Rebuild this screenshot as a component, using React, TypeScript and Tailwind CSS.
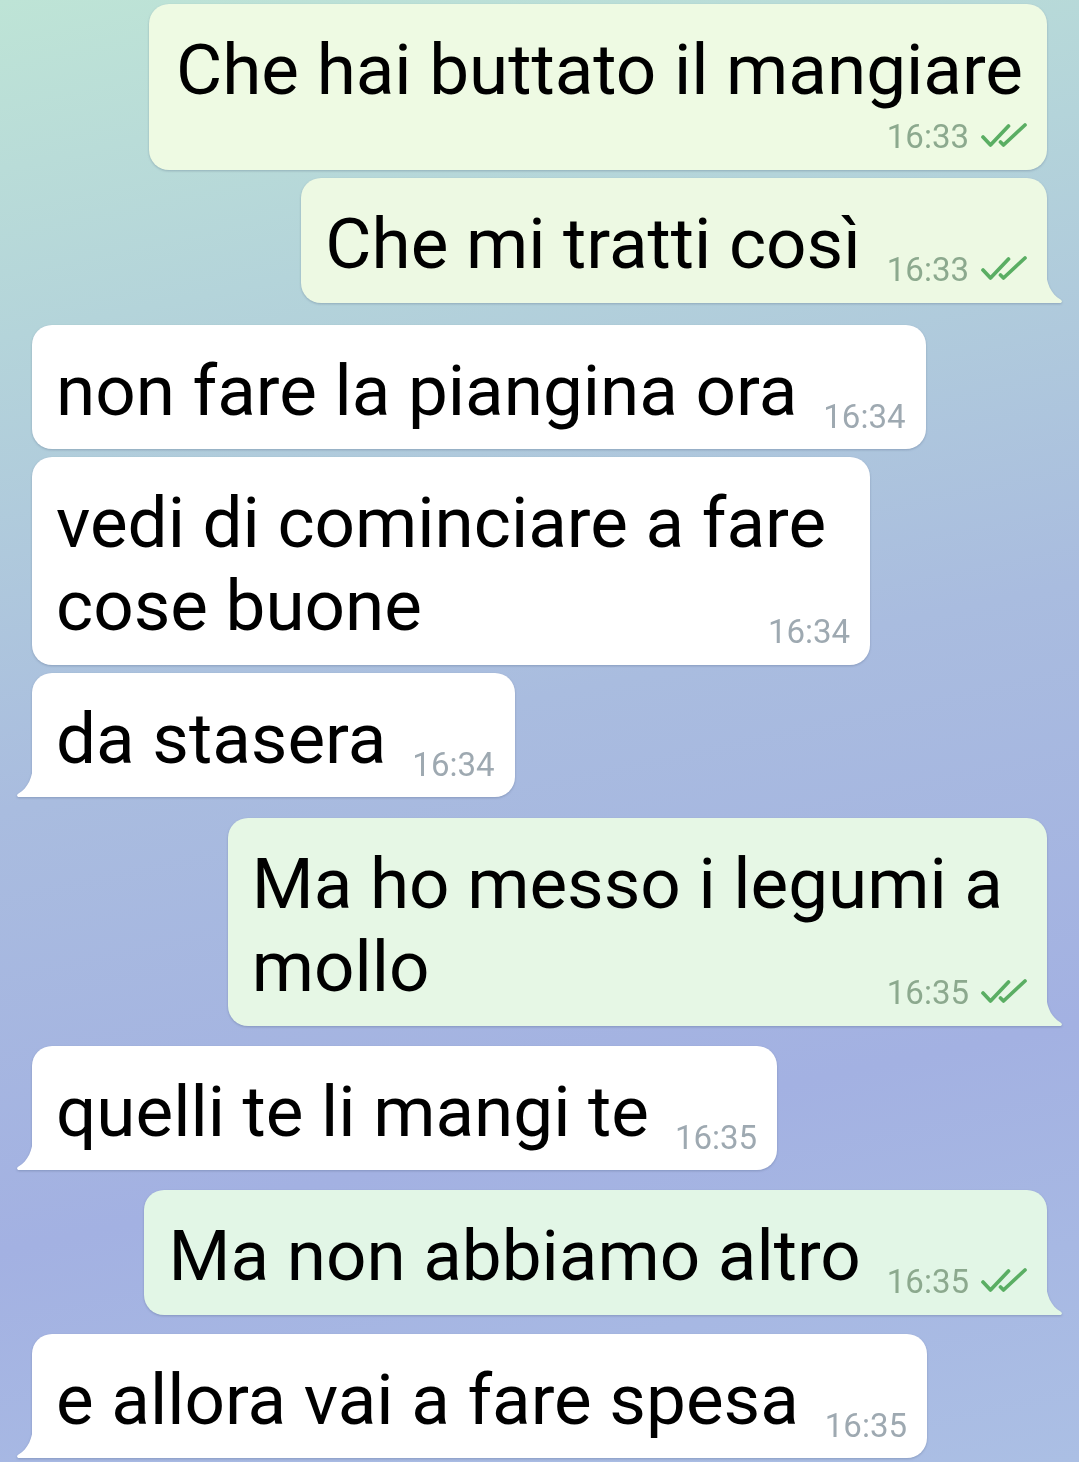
import React from "react";

type Msg = {
  out: boolean;
  lines: string[];
  time: string;
  tail?: boolean;
  timeBelow?: boolean;
  bg: string;
  fill: string;
  mt: string;
};

const messages: Msg[] = [
  { out: true, lines: ["Che hai buttato il mangiare"], time: "16:33", timeBelow: true, bg: "bg-[#eefae3]", fill: "#eefae3", mt: "mt-[4px]" },
  { out: true, lines: ["Che mi tratti così"], time: "16:33", tail: true, bg: "bg-[#edf9e3]", fill: "#edf9e3", mt: "mt-[8px]" },
  { out: false, lines: ["non fare la piangina ora"], time: "16:34", bg: "bg-white", fill: "#ffffff", mt: "mt-[22px]" },
  { out: false, lines: ["vedi di cominciare a fare", "cose buone"], time: "16:34", bg: "bg-white", fill: "#ffffff", mt: "mt-[8px]" },
  { out: false, lines: ["da stasera"], time: "16:34", tail: true, bg: "bg-white", fill: "#ffffff", mt: "mt-[8px]" },
  { out: true, lines: ["Ma ho messo i legumi a", "mollo"], time: "16:35", tail: true, bg: "bg-[#e6f7e5]", fill: "#e6f7e5", mt: "mt-[21px]" },
  { out: false, lines: ["quelli te li mangi te"], time: "16:35", tail: true, bg: "bg-white", fill: "#ffffff", mt: "mt-[20px]" },
  { out: true, lines: ["Ma non abbiamo altro"], time: "16:35", tail: true, bg: "bg-[#e2f6e6]", fill: "#e2f6e6", mt: "mt-[20px]" },
  { out: false, lines: ["e allora vai a fare spesa"], time: "16:35", tail: true, bg: "bg-white", fill: "#ffffff", mt: "mt-[19px]" },
];

function Checks() {
  return (
    <svg width="46" height="25" viewBox="0 0 46 25" className="mb-[5px] ml-[12px] shrink-0">
      <path d="M2 14 L9.5 22 L27.5 3" fill="none" stroke="#5aae63" strokeWidth="3.7" strokeLinecap="round" strokeLinejoin="round" />
      <path d="M19.5 19 L22.5 22 L44 2" fill="none" stroke="#5aae63" strokeWidth="3.7" strokeLinecap="round" strokeLinejoin="round" />
    </svg>
  );
}

function Time({ out, time }: { out: boolean; time: string }) {
  return (
    <div className="flex shrink-0 items-end">
      <span className={`text-[33px] leading-[32px] ${out ? "text-[#8ca98e]" : "text-[#9ea9b1]"}`}>{time}</span>
      {out && <Checks />}
    </div>
  );
}

function Tail({ out, fill }: { out: boolean; fill: string }) {
  return (
    <svg
      width="17"
      height="34"
      viewBox="0 0 17 34"
      className={`absolute bottom-0 ${out ? "-right-[16px] -scale-x-100" : "-left-[16px]"}`}
    >
      <path d="M17 0 C17 14 12 25 2.5 30.5 C0.3 31.8 0.8 34 3.2 34 L17 34 Z" fill={fill} />
    </svg>
  );
}

function Bubble({ m }: { m: Msg }) {
  const last = m.lines.length - 1;
  const corner = m.tail ? (m.out ? "rounded-br-none" : "rounded-bl-none") : "";
  return (
    <div
      className={`relative ${m.mt} ${m.bg} ${corner} rounded-[20px] pl-[24px] pr-[20px] pt-[24px] ${
        m.timeBelow ? "pb-[17px]" : "pb-[17.5px]"
      } drop-shadow-[0_1.5px_1px_rgba(50,70,100,0.28)]`}
    >
      {m.tail && <Tail out={m.out} fill={m.fill} />}
      {m.lines.map((line, i) =>
        i === last && !m.timeBelow ? (
          <div key={i} className="flex items-end justify-between">
            <span className="whitespace-nowrap text-[71px] leading-[83px] text-black">{line}</span>
            <div className="-mb-px ml-[26px]">
              <Time out={m.out} time={m.time} />
            </div>
          </div>
        ) : (
          <div
            key={i}
            className={`whitespace-nowrap text-[71px] leading-[83px] text-black ${
              m.timeBelow ? "pl-[3px] pr-[4px]" : "pr-[24px]"
            }`}
          >
            {line}
          </div>
        )
      )}
      {m.timeBelow && (
        <div className="mt-[10px] flex justify-end">
          <Time out={m.out} time={m.time} />
        </div>
      )}
    </div>
  );
}

export default function App() {
  return (
    <div
      className="flex h-[1462px] w-full flex-col overflow-hidden bg-[linear-gradient(168deg,#bee4d6_0%,#b4d4da_20%,#a9bcdf_48%,#a3b1e2_74%,#abbfe4_100%)] px-[32px]"
      style={{ fontFamily: "Roboto, 'Noto Sans', sans-serif" }}
    >
      {messages.map((m, i) => (
        <div key={i} className={`flex ${m.out ? "justify-end" : "justify-start"}`}>
          <Bubble m={m} />
        </div>
      ))}
    </div>
  );
}
